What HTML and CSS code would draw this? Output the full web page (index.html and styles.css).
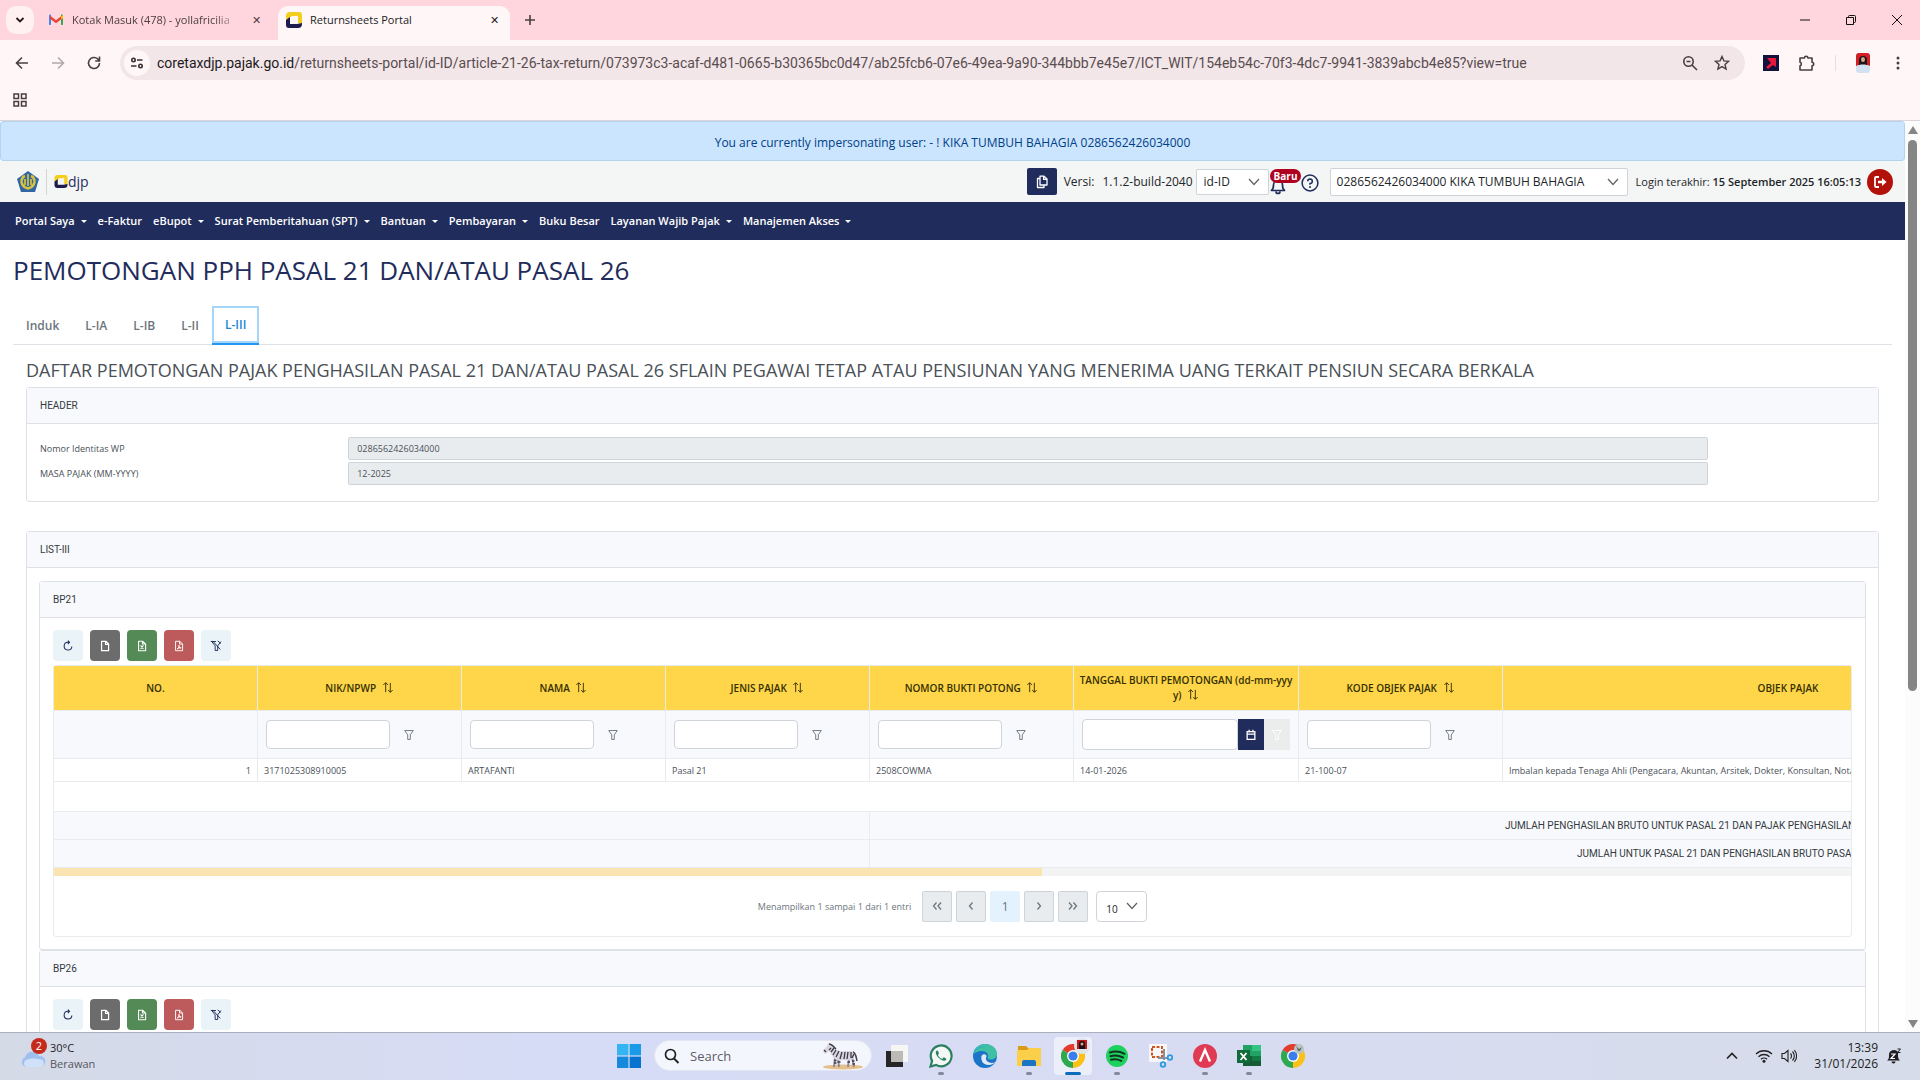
FILE: index.html
```html
<!DOCTYPE html>
<html lang="id">
<head>
    <meta charset="UTF-8">
    <meta name="viewport" content="width=device-width, initial-scale=1.0">
    <title>Returnsheets Portal</title>
    <link rel="stylesheet" href="styles.css">
</head>
<body>
    <!-- Shared icons -->
    <svg class="defs" aria-hidden="true">
        <symbol id="i-refresh" viewBox="0 0 14 14"><path d="M11.500 7.500a4.500 4.500 0 1 1-4.500-4.800h1.500M6.800.8l2 1.900-2 2" fill="none" stroke="currentColor" stroke-width="1.200"/></symbol>
        <symbol id="i-file" viewBox="0 0 14 14"><path d="M3 1.500h5l3.200 3.200v7.800H3zM7.600 1.500v3.600h3.600" fill="none" stroke="currentColor" stroke-width="1.400" stroke-linejoin="round"/></symbol>
        <symbol id="i-excel" viewBox="0 0 14 14"><path d="M3 1.500h5l3.200 3.200v7.800H3zM7.600 1.500v3.200h3.600M5.300 6.300l3.400 4M8.700 6.300l-3.400 4" fill="none" stroke="currentColor" stroke-width="1.300" stroke-linejoin="round"/></symbol>
        <symbol id="i-pdf" viewBox="0 0 14 14"><path d="M3 1.500h5l3.200 3.200v7.800H3zM7.600 1.500v3.200h3.600M4.800 10.500c2-1 2.500-3 2.200-4.300-.5 2 1 3.500 2.600 3-2-.3-3.600.2-4.800 1.300z" fill="none" stroke="currentColor" stroke-width="1.100" stroke-linejoin="round"/></symbol>
        <symbol id="i-filter" viewBox="0 0 14 14"><path d="M2 1.800h10L8.500 6.800v5.400h-3V6.800z" fill="none" stroke="currentColor" stroke-width="1.100" stroke-linejoin="round"/></symbol>
        <symbol id="i-unfilter" viewBox="0 0 14 14"><path d="M1 1.800h6M12.800 1.800 9 6.800v5.400H6V6.800L2 1.800M3 1l9 10M9 1l3.500 3" fill="none" stroke="currentColor" stroke-width="1.100" stroke-linejoin="round"/></symbol>
        <symbol id="i-sort" viewBox="0 0 12 14"><path d="M3.500 12V2M1 4.300 3.500 1.800 6 4.300M8.500 2v10M6.200 9.700l2.300 2.500 2.500-2.500" fill="none" stroke="currentColor" stroke-width="1"/></symbol>
        <symbol id="i-left" viewBox="0 0 12 12"><path d="M7.500 2.500 4.500 6l3 3.500" fill="none" stroke="currentColor" stroke-width="1.300"/></symbol>
        <symbol id="i-right" viewBox="0 0 12 12"><path d="M4.500 2.500 7.500 6l-3 3.500" fill="none" stroke="currentColor" stroke-width="1.300"/></symbol>
        <symbol id="i-first" viewBox="0 0 12 12"><path d="M5.500 2.500 2.500 6l3 3.500M10 2.500 7 6l3 3.500" fill="none" stroke="currentColor" stroke-width="1.300"/></symbol>
        <symbol id="i-last" viewBox="0 0 12 12"><path d="M2 2.500 5 6 2 9.500M6.500 2.500l3 3.500-3 3.500" fill="none" stroke="currentColor" stroke-width="1.300"/></symbol>
        <symbol id="i-chrome" viewBox="0 0 24 24">
            <path d="M12 12 1.600 6A12 12 0 0 1 22.400 6z" fill="#e33b2e"/>
            <path d="M12 12 22.400 6A12 12 0 0 1 12 24z" fill="#fbc116"/>
            <path d="M12 12v12A12 12 0 0 1 1.600 6z" fill="#2da94f"/>
            <path d="M12 6h10.400L12 24l5.200-9z" fill="#fbc116"/>
            <circle cx="12" cy="12" r="6" fill="#fff"/><circle cx="12" cy="12" r="4.600" fill="#3b7ded"/>
        </symbol>
        <symbol id="i-djp" viewBox="0 0 16 16">
            <path d="M4 0h9a3 3 0 0 1 3 3v9l-4-1V4H6L3 6 0 9V4a4 4 0 0 1 4-4z" fill="#f2cf1c"/>
            <path d="M0 8l4-3v7h7l5-1v1a4 4 0 0 1-4 4H3a3 3 0 0 1-3-3z" fill="#1d1c4c"/>
        </symbol>
    </svg>

    <!-- Browser tabs -->
    <div class="tabstrip">
        <button class="tab-search" aria-label="Search tabs"><svg width="10" height="10" viewBox="0 0 10 10"><path d="M1.500 3 5 6.500 8.500 3" fill="none" stroke="#221a1c" stroke-width="1.800"/></svg></button>
        <div class="tab">
            <svg width="16" height="16" viewBox="0 0 16 16"><path d="M1 3.500A1.500 1.500 0 0 1 3 2.600V13H2a1 1 0 0 1-1-1z" fill="#4285f4"/><path d="M13 2.600a1.500 1.500 0 0 1 2 1.200V12a1 1 0 0 1-1 1h-1z" fill="#34a853"/><path d="M2 3.500l6 4.700 6-4.700v3.200l-6 4.600-6-4.600z" fill="#ea4335"/><path d="M13 4.300l2-1v3L13 7.500z" fill="#fbbc04"/></svg>
            <span class="tab-title faded">Kotak Masuk (478) - yollafricilia</span>
            <button class="tab-close" aria-label="Close">✕</button>
        </div>
        <div class="tab active">
            <svg width="16" height="16"><use href="#i-djp"/></svg>
            <span class="tab-title">Returnsheets Portal</span>
            <button class="tab-close" aria-label="Close">✕</button>
        </div>
        <button class="new-tab" aria-label="New tab"><svg width="12" height="12" viewBox="0 0 12 12"><path d="M6 1v10M1 6h10" stroke="#4b3e41" stroke-width="1.600"/></svg></button>
        <div class="window-controls">
            <button aria-label="Minimize"><svg width="12" height="12" viewBox="0 0 12 12"><path d="M1 6h10" stroke="#111"/></svg></button>
            <button aria-label="Restore"><svg width="12" height="12" viewBox="0 0 12 12"><path d="M1.500 3.500h7v7h-7zM3.500 3.500v-1a1 1 0 0 1 1-1h5a1 1 0 0 1 1 1v5a1 1 0 0 1-1 1h-1" fill="none" stroke="#111"/></svg></button>
            <button aria-label="Close window"><svg width="12" height="12" viewBox="0 0 12 12"><path d="M1 1l10 10M11 1 1 11" stroke="#111"/></svg></button>
        </div>
    </div>

    <!-- Address bar -->
    <div class="toolbar">
        <button class="tool" aria-label="Back"><svg width="16" height="16" viewBox="0 0 16 16"><path d="M14 8H3M8 2.500 2.500 8 8 13.500" fill="none" stroke="#4b3e41" stroke-width="1.600"/></svg></button>
        <button class="tool" aria-label="Forward"><svg width="16" height="16" viewBox="0 0 16 16"><path d="M2 8h11M8 2.500 13.500 8 8 13.500" fill="none" stroke="#b3a8aa" stroke-width="1.600"/></svg></button>
        <button class="tool" aria-label="Reload"><svg width="16" height="16" viewBox="0 0 16 16"><path d="M13.500 8A5.500 5.500 0 1 1 11.800 4L13.500 5.800M13.500 1.500V6H9.200" fill="none" stroke="#4b3e41" stroke-width="1.600"/></svg></button>
        <div class="omnibox">
            <span class="site-info"><svg width="14" height="14" viewBox="0 0 14 14"><g fill="none" stroke="#3a2e31" stroke-width="1.600"><circle cx="3.500" cy="4" r="1.700"/><path d="M7 4h5.500M1 10h5.500"/><circle cx="10.500" cy="10" r="1.700"/></g></svg></span>
            <span class="url"><b>coretaxdjp.pajak.go.id</b>/returnsheets-portal/id-ID/article-21-26-tax-return/073973c3-acaf-d481-0665-b30365bc0d47/ab25fcb6-07e6-49ea-9a90-344bbb7e45e7/ICT_WIT/154eb54c-70f3-4dc7-9941-3839abcb4e85?view=true</span>
            <svg width="16" height="16" viewBox="0 0 16 16"><g fill="none" stroke="#4b3e41" stroke-width="1.600"><circle cx="6.500" cy="6.500" r="4.700"/><path d="M10 10l5 5M4.500 6.500h4"/></g></svg>
            <svg width="16" height="16" viewBox="0 0 16 16"><path d="M8 1.500l1.900 4.400 4.700.4-3.600 3.100 1.100 4.700L8 11.600l-4.100 2.500L5 9.400 1.400 6.300l4.700-.4z" fill="none" stroke="#4b3e41" stroke-width="1.400"/></svg>
        </div>
        <div class="extensions">
            <svg width="16" height="16" viewBox="0 0 16 16"><path d="M0 0h16v16H0z" fill="#12123a"/><path d="M4 3h9v9l-3-2-5 4-2-2 5-4z" fill="#e8193c"/></svg>
            <svg width="18" height="18" viewBox="0 0 18 18"><path d="M2 4h4.500a1.700 1.700 0 0 1 3.400 0H14v4.300a1.700 1.700 0 0 1 0 3.400V16H2v-4.300a1.800 1.800 0 0 0 0-3.500z" fill="none" stroke="#4b3e41" stroke-width="1.600" stroke-linejoin="round"/></svg>
            <i class="bar-divider"></i>
            <svg width="16" height="20" viewBox="0 0 16 20"><rect x="1" y="0" width="14" height="16" rx="3" fill="#d51d24"/><path d="M4 14V7a4 4 0 0 1 8 0v7z" fill="#18181c"/><ellipse cx="8" cy="6.500" rx="2" ry="2.600" fill="#d4a48c"/><path d="M1 13c4-2 10-2 14 0v4a3 3 0 0 1-3 3H4a3 3 0 0 1-3-3z" fill="#d3e1f2"/></svg>
            <svg width="16" height="16" viewBox="0 0 16 16" fill="#4b3e41"><circle cx="8" cy="3" r="1.500"/><circle cx="8" cy="8" r="1.500"/><circle cx="8" cy="13" r="1.500"/></svg>
        </div>
    </div>
    <div class="bookmarks">
        <button class="tool" aria-label="Apps"><svg width="16" height="16" viewBox="0 0 16 16"><g fill="none" stroke="#4b3e41" stroke-width="1.500"><path d="M2 2h4.500v4.500H2zM9.500 2H14v4.500H9.500zM2 9.500h4.500V14H2zM9.500 9.500H14V14H9.500z"/></g></svg></button>
    </div>

    <!-- Page -->
    <div class="viewport">
        <div class="page">
            <div class="impersonate">You are currently impersonating user: - ! KIKA TUMBUH BAHAGIA 0286562426034000</div>

            <header class="topbar">
                <svg class="emblem" width="22" height="21" viewBox="0 0 22 21"><path d="M11 0l11 8-4 13H4L0 8z" fill="#2f66a3"/><path d="M5 9c0-2 1.500-3.500 3-4M17 9c0-2-1.500-3.500-3-4M4.500 8c-.5 5 2 8.500 6.500 9.500 4.500-1 7-4.500 6.500-9.500" fill="none" stroke="#d9c23c" stroke-width="2.400"/><path d="M11 3v12M8 8v6M14 8v6" stroke="#d9c23c" stroke-width="1.700"/></svg>
                <i class="logo-divider"></i>
                <span class="brand"><svg width="14" height="13"><use href="#i-djp"/></svg>djp</span>
                <div class="topbar-right">
                    <button class="copy" aria-label="Copy"><svg width="14" height="14" viewBox="0 0 14 14"><path d="M5 1.200h4L12 4v6H5zM5 3.500H2.500v9h6.500V10M8.600 1.200v3.200H12" fill="none" stroke="#fff" stroke-width="1.300" stroke-linejoin="round"/></svg></button>
                    <span class="version"><span>Versi:</span> <span>1.1.2-build-2040</span></span>
                    <select class="lang" aria-label="Bahasa"><option>id-ID</option></select>
                    <span class="notif">
                        <svg width="18" height="18" viewBox="0 0 18 18"><path d="M2.500 13.500h13c-2-1.500-2-3-2-5.500a4.500 4.500 0 0 0-9 0c0 2.500 0 4-2 5.500zM7 14.500a2 2 0 0 0 4 0" fill="none" stroke="#1f2c5c" stroke-width="1.700" stroke-linejoin="round"/></svg>
                        <span class="badge">Baru</span>
                    </span>
                    <svg class="help" width="18" height="18" viewBox="0 0 18 18"><circle cx="9" cy="9" r="7.900" fill="none" stroke="#1f2c5c" stroke-width="1.500"/><path d="M6.700 7.200A2.300 2.300 0 1 1 9 9.500v1.300" fill="none" stroke="#1f2c5c" stroke-width="1.500"/><circle cx="9" cy="13" r="1" fill="#1f2c5c"/></svg>
                    <select class="taxpayer" aria-label="Wajib Pajak"><option>0286562426034000 KIKA TUMBUH BAHAGIA</option></select>
                    <span class="login">Login terakhir: <b>15 September 2025 16:05:13</b></span>
                    <button class="logout" aria-label="Keluar"><svg width="14" height="14" viewBox="0 0 14 14"><path d="M6 2H3a1 1 0 0 0-1 1v8a1 1 0 0 0 1 1h3" fill="none" stroke="#fff" stroke-width="1.800"/><path d="M5 5.800h4V3l4.500 4L9 11V8.200H5z" fill="#fff"/></svg></button>
                </div>
            </header>

            <nav class="menu">
                <a href="#" class="drop">Portal Saya</a>
                <a href="#">e-Faktur</a>
                <a href="#" class="drop">eBupot</a>
                <a href="#" class="drop">Surat Pemberitahuan (SPT)</a>
                <a href="#" class="drop">Bantuan</a>
                <a href="#" class="drop">Pembayaran</a>
                <a href="#">Buku Besar</a>
                <a href="#" class="drop">Layanan Wajib Pajak</a>
                <a href="#" class="drop">Manajemen Akses</a>
            </nav>

            <main class="content">
                <h1>PEMOTONGAN PPH PASAL 21 DAN/ATAU PASAL 26</h1>
                <div class="form-tabs">
                    <button>Induk</button>
                    <button>L-IA</button>
                    <button>L-IB</button>
                    <button>L-II</button>
                    <button class="current">L-III</button>
                </div>

                <div class="form-body">
                    <h2>DAFTAR PEMOTONGAN PAJAK PENGHASILAN PASAL 21 DAN/ATAU PASAL 26 SFLAIN PEGAWAI TETAP ATAU PENSIUNAN YANG MENERIMA UANG TERKAIT PENSIUN SECARA BERKALA</h2>

                    <section class="panel">
                        <h3>HEADER</h3>
                        <div class="fields">
                            <div class="field"><label for="npwp">Nomor Identitas WP</label><input id="npwp" type="text" value="0286562426034000" disabled></div>
                            <div class="field"><label for="masa">MASA PAJAK (MM-YYYY)</label><input id="masa" type="text" value="12-2025" disabled></div>
                        </div>
                    </section>

                    <section class="panel list">
                        <h3>LIST-III</h3>
                        <div class="list-body">
                            <section class="panel">
                                <h3>BP21</h3>
                                <div class="panel-body">
                                    <div class="actions">
                                        <button class="light" aria-label="Muat ulang"><svg><use href="#i-refresh"/></svg></button>
                                        <button class="grey" aria-label="CSV"><svg><use href="#i-file"/></svg></button>
                                        <button class="green" aria-label="Excel"><svg><use href="#i-excel"/></svg></button>
                                        <button class="red" aria-label="PDF"><svg><use href="#i-pdf"/></svg></button>
                                        <button class="light" aria-label="Hapus filter"><svg><use href="#i-unfilter"/></svg></button>
                                    </div>
                                    <div class="grid">
                                        <div class="grid-scroll">
                                            <table>
                                                <colgroup>
                                                    <col class="c"><col class="c"><col class="c"><col class="c"><col class="c"><col class="c-date"><col class="c"><col class="c-object">
                                                </colgroup>
                                                <thead>
                                                    <tr class="titles">
                                                        <th>NO.</th>
                                                        <th>NIK/NPWP <svg><use href="#i-sort"/></svg></th>
                                                        <th>NAMA <svg><use href="#i-sort"/></svg></th>
                                                        <th>JENIS PAJAK <svg><use href="#i-sort"/></svg></th>
                                                        <th>NOMOR BUKTI POTONG <svg><use href="#i-sort"/></svg></th>
                                                        <th>TANGGAL BUKTI PEMOTONGAN (dd-mm-yyy<br>y) <svg><use href="#i-sort"/></svg></th>
                                                        <th>KODE OBJEK PAJAK <svg><use href="#i-sort"/></svg></th>
                                                        <th>OBJEK PAJAK</th>
                                                    </tr>
                                                    <tr class="filters">
                                                        <td></td>
                                                        <td><div class="filter"><input type="text" aria-label="Filter NIK/NPWP"><button aria-label="Filter"><svg><use href="#i-filter"/></svg></button></div></td>
                                                        <td><div class="filter"><input type="text" aria-label="Filter nama"><button aria-label="Filter"><svg><use href="#i-filter"/></svg></button></div></td>
                                                        <td><div class="filter"><input type="text" aria-label="Filter jenis pajak"><button aria-label="Filter"><svg><use href="#i-filter"/></svg></button></div></td>
                                                        <td><div class="filter"><input type="text" aria-label="Filter nomor bukti"><button aria-label="Filter"><svg><use href="#i-filter"/></svg></button></div></td>
                                                        <td><div class="filter date"><input type="text" aria-label="Filter tanggal"><button class="calendar" aria-label="Kalender"><svg viewBox="0 0 14 14"><path d="M2.500 3h9v9h-9zM2.500 6h9M4.800 1v3M9.200 1v3" fill="none" stroke="#fff" stroke-width="1.500"/></svg></button><button class="off" aria-label="Filter" disabled><svg><use href="#i-filter"/></svg></button></div></td>
                                                        <td><div class="filter"><input type="text" aria-label="Filter kode objek"><button aria-label="Filter"><svg><use href="#i-filter"/></svg></button></div></td>
                                                        <td></td>
                                                    </tr>
                                                </thead>
                                                <tbody>
                                                    <tr>
                                                        <td class="num">1</td>
                                                        <td>3171025308910005</td>
                                                        <td>ARTAFANTI</td>
                                                        <td>Pasal 21</td>
                                                        <td>2508COWMA</td>
                                                        <td>14-01-2026</td>
                                                        <td>21-100-07</td>
                                                        <td>Imbalan kepada Tenaga Ahli (Pengacara, Akuntan, Arsitek, Dokter, Konsultan, Notaris)</td>
                                                    </tr>
                                                    <tr class="spacer"><td colspan="8"></td></tr>
                                                </tbody>
                                                <tfoot>
                                                    <tr><td colspan="4"></td><td colspan="4" class="total-bruto">JUMLAH PENGHASILAN BRUTO UNTUK PASAL 21 DAN PAJAK PENGHASILAN PASAL 21</td></tr>
                                                    <tr><td colspan="4"></td><td colspan="4" class="total-pasal">JUMLAH UNTUK PASAL 21 DAN PENGHASILAN BRUTO PASAL 26</td></tr>
                                                </tfoot>
                                            </table>
                                        </div>
                                        <div class="h-scroll"><i></i></div>
                                        <div class="pager">
                                            <span>Menampilkan 1 sampai 1 dari 1 entri</span>
                                            <button aria-label="Halaman pertama" disabled><svg><use href="#i-first"/></svg></button>
                                            <button aria-label="Sebelumnya" disabled><svg><use href="#i-left"/></svg></button>
                                            <button class="current">1</button>
                                            <button aria-label="Berikutnya" disabled><svg><use href="#i-right"/></svg></button>
                                            <button aria-label="Halaman terakhir" disabled><svg><use href="#i-last"/></svg></button>
                                            <select aria-label="Baris per halaman"><option>10</option></select>
                                        </div>
                                    </div>
                                </div>
                            </section>
                            <section class="panel">
                                <h3>BP26</h3>
                                <div class="panel-body">
                                    <div class="actions">
                                        <button class="light" aria-label="Muat ulang"><svg><use href="#i-refresh"/></svg></button>
                                        <button class="grey" aria-label="CSV"><svg><use href="#i-file"/></svg></button>
                                        <button class="green" aria-label="Excel"><svg><use href="#i-excel"/></svg></button>
                                        <button class="red" aria-label="PDF"><svg><use href="#i-pdf"/></svg></button>
                                        <button class="light" aria-label="Hapus filter"><svg><use href="#i-unfilter"/></svg></button>
                                    </div>
                                </div>
                            </section>
                        </div>
                    </section>
                </div>
            </main>
        </div>
        <div class="v-scroll">
            <svg width="10" height="8" viewBox="0 0 10 8"><path d="M5 0l5 8H0z" fill="#858585"/></svg>
            <div class="v-track"><i></i></div>
            <svg width="10" height="8" viewBox="0 0 10 8"><path d="M5 8l5-8H0z" fill="#858585"/></svg>
        </div>
    </div>

    <!-- Windows taskbar -->
    <footer class="taskbar">
        <div class="weather">
            <span class="cloud">
                <svg width="26" height="26" viewBox="0 0 26 26"><path d="M6 24a5 5 0 0 1-1-9.500A7.500 7.500 0 0 1 19 13a5.500 5.500 0 0 1 1.500 11z" fill="#9dc0ee"/><path d="M6 24a4 4 0 0 1 0-7c4-2 10-2 17 0 2 4 0 7-2.500 7z" fill="#cfe0f8"/></svg>
                <span class="count">2</span>
            </span>
            <span class="weather-text">30°C<small>Berawan</small></span>
        </div>
        <div class="apps">
            <button aria-label="Start"><svg width="24" height="24" viewBox="0 0 24 24"><path d="M0 0h11.400v11.400H0z" fill="#35b4f2"/><path d="M12.600 0H24v11.400H12.600z" fill="#1a9be8"/><path d="M0 12.600h11.400V24H0z" fill="#1689dc"/><path d="M12.600 12.600H24V24H12.600z" fill="#0673cf"/></svg></button>
            <label class="search">
                <svg width="16" height="16" viewBox="0 0 16 16"><circle cx="6.500" cy="6.500" r="5" fill="none" stroke="#222" stroke-width="1.700"/><path d="M10 10.500l4.500 4.500" stroke="#222" stroke-width="1.900"/></svg>
                <input type="text" placeholder="Search">
                <svg width="42" height="28" viewBox="0 0 42 28">
                    <ellipse cx="21" cy="25" rx="20" ry="2.400" fill="#e5c08a"/>
                    <path d="M13 15l-1 10M16 16l1 9M27 16l-1 9M30 15l2 10" stroke="#8f8b9b" stroke-width="2"/>
                    <path d="M1 9l4-5 1-3 2 2 3 1c2 2 3 4 6 5 5 1 10-1 14 1 2 2 2 5 0 7-3 2-6 1-9 1s-6 1-9-1c-3-2-4-6-6-8l-4 3z" fill="#d9d5df"/>
                    <path d="M31 10c3 1 3 5 4 9" fill="none" stroke="#4a4658" stroke-width="1.600"/>
                    <path d="M7 2c3 0 5 3 7 5M9 6l-2 2M12 6l-3 4M14 8l-3 5M17 9l-3 6M20 10l-2 7M23 10l-1 7M26 10l-1 7M29 10v6M32 12l-2 4M12 18.500h2.500M12 21h2.500M15.500 20h3M25.500 20h2.500M30 19h2.500M30.500 22h2.500M2 8l2 2" fill="none" stroke="#3d3a4a" stroke-width="1.300"/>
                </svg>
            </label>
            <button aria-label="Task view"><svg width="24" height="24" viewBox="0 0 24 24"><path d="M6 1h17v17H6z" fill="#f6f6f4"/><path d="M1 7h17v16H1z" fill="#262626"/><path d="M6 7h12v11H6z" fill="#bdbab6"/></svg></button>
            <button class="running" aria-label="WhatsApp"><svg width="24" height="24" viewBox="0 0 24 24"><path d="M1.500 22.500l1.600-5.600a10.400 10.400 0 1 1 4 4z" fill="#f3f8f5" stroke="#2b8062" stroke-width="2.200"/><path d="M8 6.500c-2 1-1.500 4 1.500 7s6 4.300 7.500 2.500c.8-1 .5-1.500-2.300-2.700L13.200 15C11 14 9.500 12.500 8.900 11L10 9.500C9 6.500 8.800 6.200 8 6.500z" fill="#2b8062"/></svg></button>
            <button aria-label="Edge"><svg width="24" height="24" viewBox="0 0 24 24"><circle cx="12" cy="12" r="12" fill="#1c74c9"/><path d="M0 11C1 4 6 0 12 0c8 0 12 5.500 12 10 0 4-3.500 5.500-6 5.500-3 0-4-1-3-2.500C16 10 13 7 9 7c-4 0-8 2-9 4z" fill="#3fc0a5"/><path d="M0 12C.5 5 6 1.500 12 3c-6 0-11 3-12 9z" fill="#2aa3dd"/><path d="M8.500 12c-1 5 2 9 7 9 3 0 5-1 7-3-3 1.500-6 1-8-.5-2-1.500-2-3.500-1-5 .5-2-3.500-3.500-5-.5z" fill="#dfe8f6"/></svg></button>
            <button class="running" aria-label="File Explorer"><svg width="24" height="24" viewBox="0 0 24 24"><path d="M1 2h8l2 2h11v6H1z" fill="#d99a14"/><path d="M0 6h10l2-2h12v18H0z" fill="#fbcf4a"/><path d="M5 22v-4a2 2 0 0 1 2-2h10a2 2 0 0 1 2 2v4z" fill="#1b73c4"/></svg></button>
            <button class="running focused" aria-label="Chrome">
                <svg width="24" height="24"><use href="#i-chrome"/></svg>
                <svg class="profile" width="16" height="16" viewBox="0 0 16 16"><circle cx="8" cy="8" r="8" fill="#dfe3ea"/><path d="M3 2h10v9H3z" fill="#c3161d"/><path d="M5 11V6a3 3 0 0 1 6 0v5z" fill="#1a1114"/><circle cx="8" cy="6" r="1.500" fill="#d8a58f"/></svg>
            </button>
            <button class="running" aria-label="Spotify"><svg width="24" height="24" viewBox="0 0 24 24"><circle cx="12" cy="12" r="11" fill="#1ed05e"/><path d="M5 8.500c5-1.500 10-1 14.500 1.300M5.500 12.300c4-1.200 8.500-.7 12.500 1.200M6 15.800c3.500-.9 7-.5 10.300 1" fill="none" stroke="#11331f" stroke-width="2" stroke-linecap="round"/></svg></button>
            <button aria-label="Snipping Tool"><svg width="24" height="24" viewBox="0 0 24 24"><path d="M0 0h18v18H0z" fill="#f7f7f9"/><path d="M3 3h10v10H3z" fill="none" stroke="#d0561f" stroke-width="2" stroke-dasharray="3 1.500"/><path d="M15 5v11M9 14h9" stroke="#8a919c" stroke-width="2"/><circle cx="14" cy="20.500" r="2.300" fill="none" stroke="#2d9be0" stroke-width="1.800"/><circle cx="21" cy="13.500" r="2.300" fill="none" stroke="#2d9be0" stroke-width="1.800"/></svg></button>
            <button class="running" aria-label="App"><svg width="24" height="24" viewBox="0 0 24 24"><circle cx="12" cy="12" r="12" fill="#e03a55"/><path d="M7 17.500 12 6l5 11.500" fill="none" stroke="#fff" stroke-width="2.400"/></svg></button>
            <button class="running" aria-label="Excel"><svg width="24" height="24" viewBox="0 0 24 24"><path d="M6 1h18v21H6z" fill="#21a366"/><path d="M6 12h18v10H6z" fill="#185c37"/><path d="M15 1h9v6h-9z" fill="#33c481"/><path d="M15 12h9v5h-9z" fill="#107c41"/><path d="M0 6h13v13H0z" fill="#0f6b39"/><path d="M3.500 9l6 7M9.500 9l-6 7" stroke="#fff" stroke-width="1.900"/></svg></button>
            <button aria-label="Chrome">
                <svg width="24" height="24"><use href="#i-chrome"/></svg>
                <svg class="profile small" width="10" height="10" viewBox="0 0 10 10"><circle cx="5" cy="5" r="5" fill="#b9c6c6"/><path d="M2 2l3 3 3-2-2 4H4z" fill="#5e6a66"/></svg>
            </button>
        </div>
        <div class="tray">
            <svg width="14" height="14" viewBox="0 0 14 14"><path d="M2 9.500l5-5 5 5" fill="none" stroke="#222" stroke-width="1.700"/></svg>
            <svg class="wifi" width="18" height="16" viewBox="0 0 18 16"><path d="M1 6a11.500 11.500 0 0 1 16 0M3.500 8.700a8 8 0 0 1 11 0M6 11.300a4.300 4.300 0 0 1 6 0" fill="none" stroke="#222" stroke-width="1.300"/><circle cx="9" cy="13.300" r="1.500" fill="#222"/></svg>
            <svg width="16" height="16" viewBox="0 0 16 16"><path d="M1 5.500h2.500L7 2.500v11l-3.500-3H1zM9.500 5.500a3.500 3.500 0 0 1 0 5M11.500 3.500a6.500 6.500 0 0 1 0 9M13.300 2a9 9 0 0 1 0 12" fill="none" stroke="#222" stroke-width="1.100"/></svg>
            <span class="clock">13:39<br>31/01/2026</span>
            <svg width="16" height="16" viewBox="0 0 16 16"><path d="M1 12.500c2-1 2-3 2-5.500a5 5 0 0 1 9-3v3.500c0 2 .5 4 2 5zM5.500 13.500h4a2 2 0 0 1-4 0z" fill="#1d1d22"/><path d="M5 6h4l-4 4.500h4" fill="none" stroke="#fff" stroke-width="1.200"/><path d="M11.500 1h3l-3 3.500h3" fill="none" stroke="#1d1d22"/></svg>
        </div>
    </footer>
</body>
</html>
```
FILE: styles.css
```css
* {
    box-sizing: border-box;
}

body {
    display: flex;
    flex-direction: column;
    height: 100vh;
    margin: 0;
    overflow: hidden;
    background-color: #fff;
    color: #495057;
    font-family: "Open Sans", "Noto Sans", sans-serif;
    font-size: 9px;
}

button, input, select {
    margin: 0;
    padding: 0;
    border: none;
    background: none;
    color: inherit;
    font: inherit;
}

button {
    display: inline-flex;
    align-items: center;
    justify-content: center;
    cursor: pointer;
}

svg {
    flex-shrink: 0;
}

.defs {
    display: none;
}

/* Browser tabs */
.tabstrip {
    display: flex;
    align-items: center;
    height: 40px;
    padding: 6px 8px 0 6px;
    background-color: #ffd5de;
    font-size: 11px;
    color: #4b3e41;
}

.tab-search {
    width: 28px;
    height: 28px;
    margin-bottom: 6px;
    border-radius: 10px;
    background-color: #fff0f2;
}

.tab {
    display: flex;
    align-items: center;
    gap: 8px;
    width: 240px;
    height: 34px;
    padding: 0 10px 7px 14px;
}

.tab.active {
    width: 232px;
    margin-left: 4px;
    padding: 0 8px 7px;
    border-radius: 10px 10px 0 0;
    background-color: #fff7f7;
    color: #221a1c;
}

.tab-title {
    flex: 1;
    overflow: hidden;
    white-space: nowrap;
}

.faded {
    mask-image: linear-gradient(to right, #000 85%, transparent);
}

.tab-close {
    width: 16px;
    font-size: 11px;
}

.new-tab {
    width: 28px;
    margin: 0 0 6px 6px;
}

.window-controls {
    display: flex;
    gap: 34px;
    margin: 0 9px 6px auto;
}

/* Address bar */
.toolbar {
    display: flex;
    align-items: center;
    height: 46px;
    padding: 0 14px;
    background-color: #fff7f7;
}

.tool {
    width: 16px;
    height: 16px;
    margin-right: 20px;
}

.omnibox {
    display: flex;
    flex: 1;
    align-items: center;
    gap: 16px;
    height: 34px;
    margin-left: -2px;
    padding: 0 15px 0 4px;
    border-radius: 17px;
    background-color: #f2e6e9;
    font-family: Roboto, "Open Sans", sans-serif;
    font-size: 14px;
    color: #5a4d50;
}

.site-info {
    display: flex;
    align-items: center;
    justify-content: center;
    width: 26px;
    height: 26px;
    margin-right: -9px;
    border-radius: 50%;
    background-color: #fff7f7;
}

.url {
    flex: 1;
    overflow: hidden;
    white-space: nowrap;
}

.url b {
    color: #221a1c;
    font-weight: 400;
}

.extensions {
    display: flex;
    align-items: center;
    gap: 19px;
    margin-left: 18px;
}

.bar-divider {
    width: 1px;
    height: 16px;
    background-color: #f0dcde;
}

.bookmarks {
    height: 35px;
    padding: 6px 12px;
    border-bottom: 1px solid #dcd4dc;
    background-color: #fff7f7;
}

/* Page frame */
.viewport {
    display: flex;
    flex: 1;
    min-height: 0;
}

.page {
    flex: 1;
    min-width: 0;
    overflow: hidden;
}

.v-scroll {
    display: flex;
    flex-direction: column;
    align-items: center;
    gap: 6px;
    width: 15px;
    padding: 5px 0 4px;
    background-color: #fcfcfc;
}

.v-track {
    flex: 1;
}

.v-track i {
    display: block;
    width: 9px;
    height: 63%;
    border-radius: 5px;
    background-color: #858585;
}

.impersonate {
    height: 40px;
    padding-top: 1px;
    border: 1px solid #b3d4ef;
    border-radius: 3px;
    background-color: #cce5ff;
    color: #004085;
    font-size: 12px;
    line-height: 40px;
    text-align: center;
}

.topbar {
    display: flex;
    align-items: center;
    height: 41px;
    padding: 0 12px 0 17px;
    background-color: #f4f5f5;
    color: #212529;
    font-size: 12px;
}

.logo-divider {
    width: 1px;
    height: 26px;
    margin: 0 7px;
    background-color: #d5d5d8;
}

.brand {
    display: flex;
    align-items: center;
    color: #1f2c5c;
    font-size: 14px;
    font-weight: 500;
}

.topbar-right {
    display: flex;
    align-items: center;
    margin-left: auto;
}

.copy {
    width: 30px;
    height: 27px;
    border-radius: 2px;
    background-color: #1f2c5c;
}

.version {
    display: flex;
    gap: 8px;
    margin: 0 3px 0 7px;
}

select {
    appearance: none;
    border: 1px solid #ced4da;
    border-radius: 2px;
    background: #fff url("data:image/svg+xml,%3Csvg xmlns='http://www.w3.org/2000/svg' width='12' height='8'%3E%3Cpath d='M1 1l5 5.500L11 1' fill='none' stroke='%23666' stroke-width='1.300'/%3E%3C/svg%3E") no-repeat right 8px center;
}

.lang {
    width: 73px;
    height: 26px;
    padding-left: 7px;
}

.notif {
    position: relative;
    display: flex;
    align-items: flex-end;
    height: 26px;
    margin-right: 12px;
}

.badge {
    position: absolute;
    top: 0;
    left: 1px;
    padding: 0 4px;
    border-radius: 7px;
    background-color: #b00020;
    color: #fff;
    font-size: 10px;
    font-weight: 700;
    line-height: 14px;
}

.help {
    margin: 2px 11px 0 2px;
}

.taxpayer {
    width: 298px;
    height: 28px;
    padding-left: 6px;
}

.login {
    margin: 0 6px 0 8px;
    font-size: 11px;
}

.login b {
    font-weight: 600;
}

.logout {
    width: 26px;
    height: 26px;
    border-radius: 50%;
    background-color: #b3120b;
}

.menu {
    display: flex;
    gap: 11px;
    height: 38px;
    padding: 0 15px;
    background-color: #1f2c5c;
    font-size: 11px;
    font-weight: 600;
    line-height: 38px;
}

.menu a {
    color: #fff;
    text-decoration: none;
}

.drop::after {
    content: "";
    display: inline-block;
    margin-left: 6px;
    border: 3px solid transparent;
    border-top-color: #fff;
    border-bottom-width: 0;
    vertical-align: 2px;
}

/* Form */
.content {
    padding: 12px 13px 0;
}

h1 {
    margin: 0;
    color: #1f2c5c;
    font-size: 26px;
    font-weight: 400;
    line-height: 36px;
}

.form-tabs {
    display: flex;
    margin-top: 18px;
    border-bottom: 1px solid #dee2e6;
    color: #6c757d;
    font-size: 12px;
    font-weight: 600;
}

.form-tabs button {
    height: 39px;
    margin-bottom: -1px;
    padding: 0 13px;
}

.form-tabs .current {
    border-bottom: 2px solid #2196f3;
    box-shadow: inset 0 0 0 2px #a6d5fa;
    color: #2185d8;
}

.form-body {
    padding: 12px 13px 0;
}

h2 {
    margin: 0 0 4px;
    font-size: 18px;
    font-weight: 400;
    line-height: 26px;
    white-space: nowrap;
}

.panel {
    border: 1px solid #dee2e6;
    border-radius: 3px;
}

.panel h3 {
    margin: 0;
    padding: 0 13px;
    border-bottom: 1px solid #dee2e6;
    background-color: #f8f9fc;
    color: #343a40;
    font-family: Roboto, "Open Sans", sans-serif;
    font-size: 10px;
    font-weight: 400;
    line-height: 35px;
}

.fields {
    display: flex;
    flex-direction: column;
    gap: 2px;
    padding: 13px 25px 16px 13px;
}

.field {
    display: grid;
    grid-template-columns: 17% 75%;
    align-items: center;
}

.field input {
    height: 23px;
    padding: 0 8px;
    border: 1px solid #ced4da;
    border-radius: 2px;
    background-color: #e9ecef;
    color: #495057;
}

.list {
    margin-top: 29px;
}

.list-body {
    padding: 13px 12px;
}

.panel-body {
    padding: 12px 13px;
}

.actions {
    display: flex;
    gap: 7px;
}

.actions button {
    width: 30px;
    height: 31px;
    border-radius: 4px;
    color: #fff;
}

.actions svg {
    width: 12px;
    height: 12px;
}

.actions .light {
    background-color: #eaf3f8;
    color: #1f2c5c;
}

.actions .grey {
    background-color: #6c6c6c;
}

.actions .green {
    background-color: #538a55;
}

.actions .red {
    background-color: #bd5a5b;
}

/* Grid */
.grid {
    margin-top: 4px;
    border: 1px solid #e9ecef;
    border-radius: 3px;
}

.grid-scroll {
    overflow: hidden;
}

table {
    width: 2020px;
    border-spacing: 0;
    table-layout: fixed;
}

.c {
    width: 204px;
}

.c-date {
    width: 225px;
}

.c-object {
    width: 571px;
}

th, td {
    height: 23px;
    padding: 0 6px;
    border-right: 1px solid #e9ecef;
    border-bottom: 1px solid #e9ecef;
    text-align: left;
    white-space: nowrap;
}

th {
    height: 45px;
    padding: 0 4px;
    background-color: #ffd54a;
    color: #343000;
    font-size: 10px;
    font-weight: 600;
    line-height: 15px;
    text-align: center;
}

th svg {
    width: 12px;
    height: 13px;
    margin-left: 3px;
    vertical-align: -2px;
}

.filters td {
    height: 48px;
    padding: 0 8px;
    background-color: #f8f9fc;
}

.filter {
    display: flex;
    align-items: center;
}

.filter input {
    width: 124px;
    height: 29px;
    border: 1px solid #ced4da;
    border-radius: 4px;
    background-color: #fff;
}

.filter button {
    width: 26px;
    height: 31px;
    margin-left: 6px;
    color: #6c757d;
}

.filter svg {
    width: 12px;
    height: 12px;
}

.filter.date input {
    flex: 1;
    width: 0;
    height: 31px;
}

.filter.date button {
    margin: 0;
    background-color: #1f2c5c;
}

.filter.date .off {
    background-color: #ebecec;
    color: #fff;
}

.num {
    text-align: right;
}

.spacer td {
    height: 30px;
}

tfoot td {
    height: 28px;
    background-color: #f8f9fc;
    color: #343a40;
    font-family: Roboto, "Open Sans", sans-serif;
    font-size: 10px;
}

.total-bruto {
    padding-left: 635px;
}

.total-pasal {
    padding-left: 707px;
}

.h-scroll {
    height: 8px;
    background-color: #f3f3f3;
}

.h-scroll i {
    display: block;
    width: 55%;
    height: 8px;
    background-color: #f9e4b2;
}

.pager {
    display: flex;
    align-items: center;
    justify-content: center;
    gap: 4px;
    height: 60px;
    color: #6c757d;
}

.pager span {
    margin-right: 7px;
}

.pager button {
    width: 30px;
    height: 31px;
    border: 1px solid #ced4da;
    border-radius: 2px;
    background-color: #e9ecef;
    color: #6c757d;
}

.pager svg {
    width: 12px;
    height: 12px;
}

.pager .current {
    border-color: #e3f2fd;
    background-color: #e3f2fd;
    font-size: 12px;
}

.pager select {
    width: 51px;
    height: 31px;
    margin-left: 4px;
    padding: 6px 0 0 9px;
    border-radius: 4px;
    color: #212529;
    font-size: 10px;
}

/* Taskbar */
.taskbar {
    display: grid;
    grid-template-columns: 1fr auto 1fr;
    align-items: center;
    height: 48px;
    padding: 0 18px 2px 20px;
    border-top: 1px solid #a9afbd;
    background: linear-gradient(to right, #d5dae7, #d6dcf6 30%, #d8dcf3 60%, #d6dce9);
    color: #1d1d22;
    font-size: 11px;
}

.weather {
    display: flex;
    align-items: center;
    gap: 4px;
}

.cloud {
    position: relative;
    display: flex;
}

.count {
    position: absolute;
    top: -5px;
    right: -1px;
    width: 16px;
    border-radius: 8px;
    background-color: #c42b1c;
    color: #fff;
    font-size: 11px;
    line-height: 16px;
    text-align: center;
}

.weather-text {
    line-height: 16px;
}

.weather-text small {
    display: block;
    color: #55565e;
    font-size: 11px;
}

.apps {
    display: flex;
    align-items: center;
    gap: 6px;
}

.apps button {
    position: relative;
    width: 38px;
    height: 38px;
    border-radius: 4px;
}

.search {
    display: flex;
    align-items: center;
    gap: 10px;
    width: 218px;
    height: 31px;
    padding: 0 7px 0 9px;
    border: 1px solid #e3e6f2;
    border-radius: 16px;
    background-color: #f4f6fd;
    font-size: 13px;
}

.search input {
    flex: 1;
    width: 0;
}

.search input::placeholder {
    color: #5c5d66;
}

.running::after {
    content: "";
    position: absolute;
    bottom: 0;
    left: 16px;
    width: 6px;
    height: 3px;
    border-radius: 2px;
    background-color: #83889a;
}

.focused {
    background-color: #eceffa;
}

.focused::after {
    left: 11px;
    width: 16px;
    background-color: #0f6cbd;
}

.profile {
    position: absolute;
    top: 1px;
    right: 2px;
}

.profile.small {
    top: 7px;
    right: 8px;
}

.tray {
    display: flex;
    align-items: center;
    justify-content: flex-end;
    gap: 8px;
}

.wifi {
    margin-left: 8px;
}

.clock {
    margin-left: 9px;
    font-size: 12px;
    line-height: 16px;
    text-align: right;
}
```
